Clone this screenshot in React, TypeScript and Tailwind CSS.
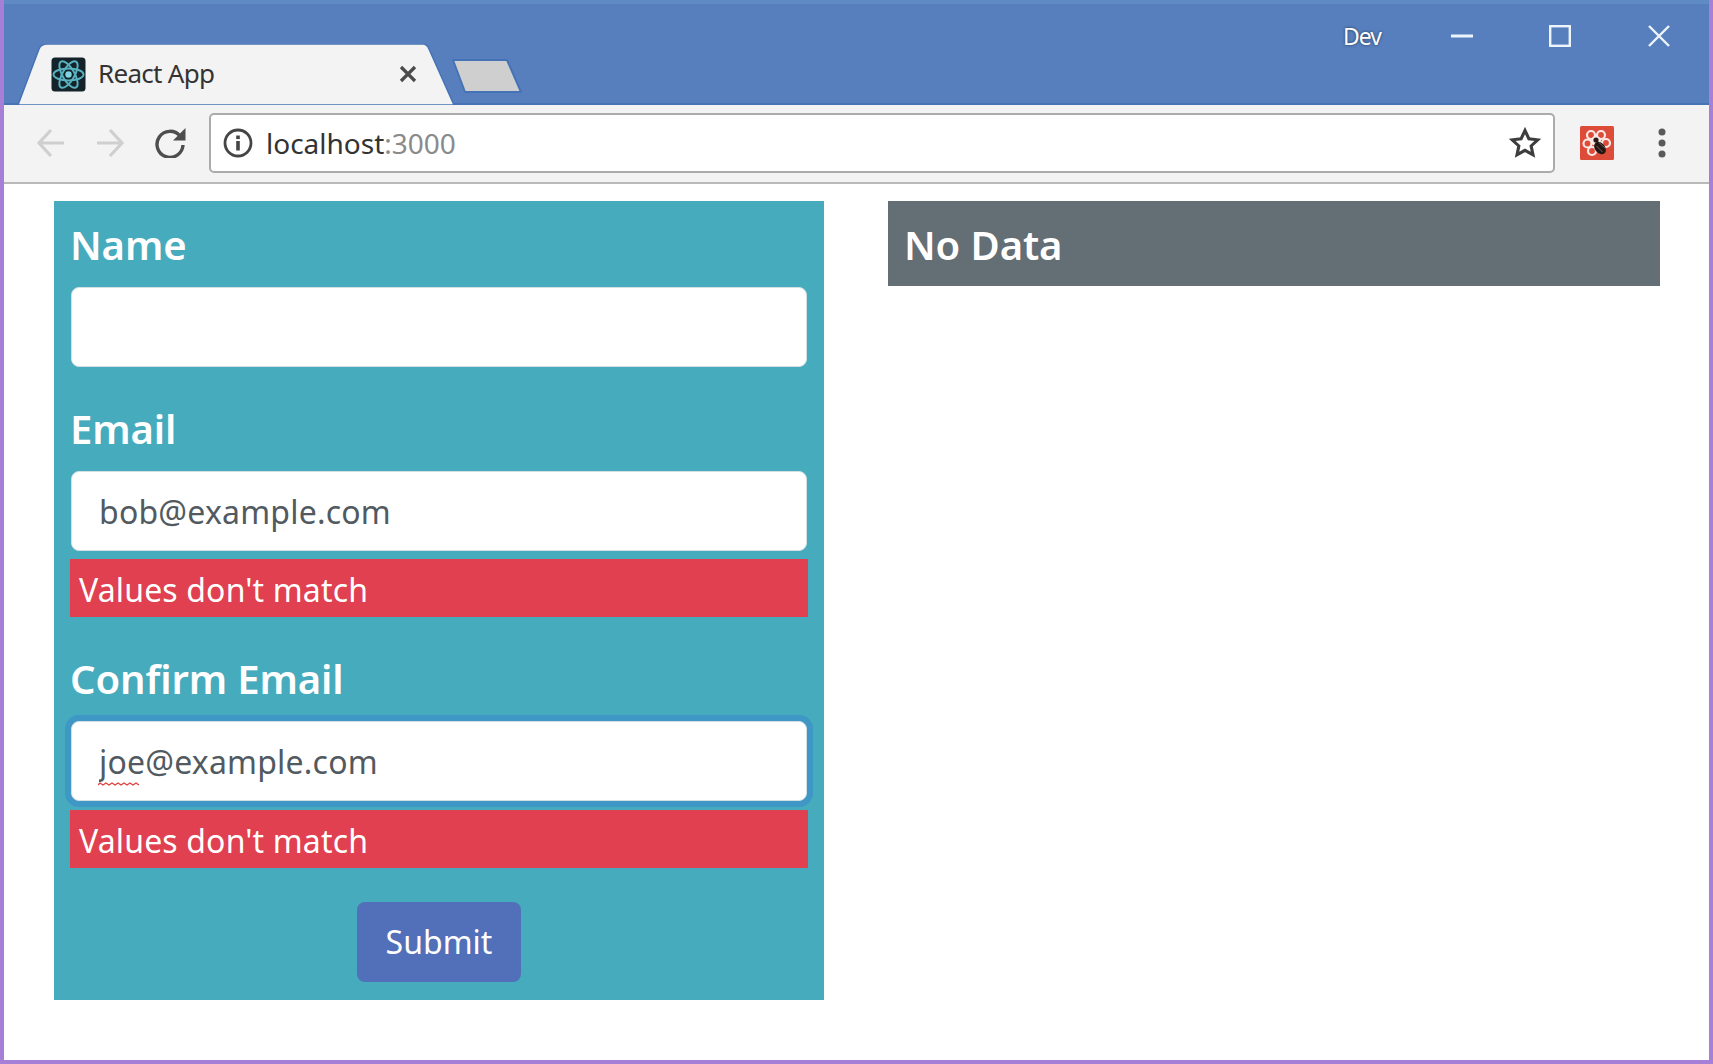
import React from "react";

const sans = "font-['Noto_Sans','Open_Sans',sans-serif]";

function ReactIcon() {
  return (
    <svg width="35" height="35" viewBox="0 0 35 35" className="shrink-0">
      <rect x="0.5" y="0.5" width="34" height="34" rx="3.5" fill="#14222a" />
      <g fill="none" stroke="#58b1bf" strokeWidth="2">
        <ellipse cx="17.5" cy="17.5" rx="15" ry="6" />
        <ellipse cx="17.5" cy="17.5" rx="15" ry="6" transform="rotate(60 17.5 17.5)" />
        <ellipse cx="17.5" cy="17.5" rx="15" ry="6" transform="rotate(120 17.5 17.5)" />
      </g>
      <circle cx="17.5" cy="17.5" r="3.2" fill="#7fd4df" />
    </svg>
  );
}

function ExtensionIcon() {
  return (
    <svg width="34" height="34" viewBox="0 0 34 34">
      <rect width="34" height="34" rx="1.5" fill="#dd4b39" />
      <g fill="none" stroke="#fbe9e6" strokeWidth="2.2">
        <circle cx="11" cy="9" r="4" />
        <circle cx="21" cy="9" r="4" />
        <circle cx="7.5" cy="17.5" r="4" />
        <circle cx="26" cy="17" r="4" />
        <circle cx="12" cy="25" r="4" />
      </g>
      <circle cx="16" cy="15" r="5" fill="#fbe9e6" />
      <circle cx="16" cy="14" r="2.6" fill="#2a1a16" />
      <ellipse cx="20" cy="22" rx="5" ry="7" fill="#221714" transform="rotate(-40 20 22)" />
      <path d="M19 16.5l6.5 6M16.5 20l6 6" stroke="#7c5a52" strokeWidth="1" />
    </svg>
  );
}

function ChromeBar() {
  return (
    <>
      <div className="relative h-[105px] bg-[#577fbd] border-t-[4px] border-t-[#5f8ac4] border-b-[2px] border-b-[#4673b5] flex items-end">
        <div className="relative ml-[13px] w-[438px] h-[61px] -mb-[2px] flex items-center shrink-0">
          <svg width="438" height="61" viewBox="0 0 438 61" className="absolute inset-0">
            <path d="M1 61 L22 5 Q24 0 30 0 L406 0 Q410 0 412 5 L437 61 Z" fill="#f3f3f3" stroke="#4673b5" strokeWidth="1.5" />
          </svg>
          <div className="relative ml-[34px] flex items-center pb-[1px]">
            <ReactIcon />
            <span className={`${sans} ml-[12px] -mt-[2px] text-[26px] leading-[36px] text-[#333] tracking-[-0.7px]`}>React App</span>
          </div>
          <svg width="18" height="18" viewBox="0 0 18 18" className="absolute left-[382px] top-[21px]">
            <path d="M2 2L16 16M16 2L2 16" stroke="#4a4a4a" strokeWidth="3.2" />
          </svg>
        </div>
        <svg width="72" height="36" viewBox="0 0 72 36" className="-ml-[4px] mb-[9px] shrink-0">
          <path d="M2 2 L56 2 L70 34 L14 34 Z" fill="#cfcfcf" stroke="#4673b5" strokeWidth="2" strokeLinejoin="round" />
        </svg>
        <div className="absolute top-[20px] right-[39px] flex items-center h-[23px]">
          <span className={`${sans} w-[40px] mr-[68px] text-[23px] leading-[26px] text-white tracking-[-1px] [text-shadow:0_0_3px_#22344f]`}>Dev</span>
          <svg width="22" height="4" viewBox="0 0 22 4" className="mr-[76px]"><rect width="22" height="3" y="0.5" fill="#eef4fb" /></svg>
          <svg width="22" height="22" viewBox="0 0 22 22" className="mr-[77px]"><rect x="1.2" y="1.2" width="19.6" height="19.6" fill="none" stroke="#eef4fb" strokeWidth="2.4" /></svg>
          <svg width="22" height="22" viewBox="0 0 22 22"><path d="M1 1L21 21M21 1L1 21" stroke="#eef4fb" strokeWidth="2.4" /></svg>
        </div>
      </div>
      <div className="h-[79px] bg-[#f3f3f3] border-b-[2px] border-b-[#b9b9b9] flex items-center pb-[2px]">
        <svg width="29" height="30" viewBox="0 0 29 30" className="ml-[32px] shrink-0">
          <path d="M28 15H3M15 2L3 15L15 28" fill="none" stroke="#cfcfcf" strokeWidth="3.2" />
        </svg>
        <svg width="29" height="30" viewBox="0 0 29 30" className="ml-[31px] shrink-0">
          <path d="M1 15H26M14 2L26 15L14 28" fill="none" stroke="#cfcfcf" strokeWidth="3.2" />
        </svg>
        <svg width="31" height="30" viewBox="0 0 31 30" className="ml-[30px] shrink-0">
          <path d="M25 8A13 13 0 1 0 28 17" fill="none" stroke="#4d4d4d" strokeWidth="3.4" />
          <path d="M30.5 0V12.5H18Z" fill="#4d4d4d" />
        </svg>
        <div className="ml-[23px] w-[1346px] h-[60px] bg-white border-[2px] border-[#ababab] rounded-[5px] flex items-center shrink-0">
          <svg width="30" height="30" viewBox="0 0 30 30" className="ml-[12px] shrink-0">
            <circle cx="15" cy="15" r="13" fill="none" stroke="#454545" strokeWidth="2.8" />
            <rect x="13.2" y="13" width="3.6" height="9.5" fill="#454545" />
            <rect x="13.2" y="7.5" width="3.6" height="3.6" fill="#454545" />
          </svg>
          <span className={`${sans} ml-[13px] text-[28px] leading-[36px] text-[#333] tracking-[0px]`}>
            localhost<span className="text-[#8a8a8a]">:3000</span>
          </span>
          <svg width="32" height="32" viewBox="0 0 24 24" className="ml-auto mr-[12px] shrink-0">
            <path d="M12 2.6l2.9 6.2 6.7.8-5 4.6 1.4 6.7-6-3.4-6 3.4 1.4-6.7-5-4.6 6.7-.8z" fill="none" stroke="#3d3d3d" strokeWidth="2.3" strokeLinejoin="miter" />
          </svg>
        </div>
        <div className="ml-[25px] shrink-0 flex"><ExtensionIcon /></div>
        <svg width="8" height="30" viewBox="0 0 8 30" className="ml-[44px] shrink-0">
          <circle cx="4" cy="4" r="3.5" fill="#5a5a5a" />
          <circle cx="4" cy="15" r="3.5" fill="#5a5a5a" />
          <circle cx="4" cy="26" r="3.5" fill="#5a5a5a" />
        </svg>
      </div>
    </>
  );
}

const labelCls = `${sans} block -ml-px h-[58px] text-[40px] leading-[56px] font-semibold text-white tracking-[-0.1px]`;
const inputCls = `${sans} block w-full h-[80px] bg-white rounded-[8px] border border-[#d5e0e4] pl-[27px] text-[32px] text-[#525a61] outline-none tracking-[0.2px]`;
const errorCls = `${sans} -mx-px h-[58px] bg-[#e0404f] pl-[9px] text-[32px] leading-[62px] text-white tracking-[0.15px]`;

export default function App() {
  return (
    <div className="w-[1713px] h-[1064px] bg-white border-x-[4px] border-b-[4px] border-[#a67fd6] overflow-hidden">
      <ChromeBar />
      <div className="pt-[17px] pl-[50px] grid grid-cols-[770px_772px] gap-x-[64px] items-start">
        <form className="bg-[#46abbd] px-[17px] pt-[16px] pb-[18px]">
          <div>
            <label className={labelCls}>Name</label>
            <input className={`${inputCls} mt-[12px]`} readOnly defaultValue="" />
          </div>
          <div className="mt-[34px]">
            <label className={labelCls}>Email</label>
            <input className={`${inputCls} mt-[12px]`} readOnly defaultValue="bob@example.com" />
            <div className={`${errorCls} mt-[8px]`}>Values don't match</div>
          </div>
          <div className="mt-[34px]">
            <label className={labelCls}>Confirm Email</label>
            <div className="relative mt-[12px]">
              <input className={`${inputCls} shadow-[0_0_0_6px_#3f97c6]`} readOnly defaultValue="joe@example.com" />
              <svg width="48" height="6" viewBox="0 0 48 6" className="absolute left-[27px] top-[60px]">
                <path d="M0 4l2-2 3 2 3-2 3 2 3-2 3 2 3-2 3 2 3-2 3 2 3-2 3 2 3-2 3 2" fill="none" stroke="#e0413f" strokeWidth="1.3" />
              </svg>
            </div>
            <div className={`${errorCls} mt-[9px]`}>Values don't match</div>
          </div>
          <div className="mt-[34px] flex justify-center">
            <button type="button" className={`${sans} w-[164px] h-[80px] bg-[#5270b9] rounded-[8px] text-[32px] text-white`}>Submit</button>
          </div>
        </form>
        <div className="bg-[#646e75] h-[85px] px-[17px] pt-[16px]">
          <div className={labelCls}>No Data</div>
        </div>
      </div>
    </div>
  );
}
